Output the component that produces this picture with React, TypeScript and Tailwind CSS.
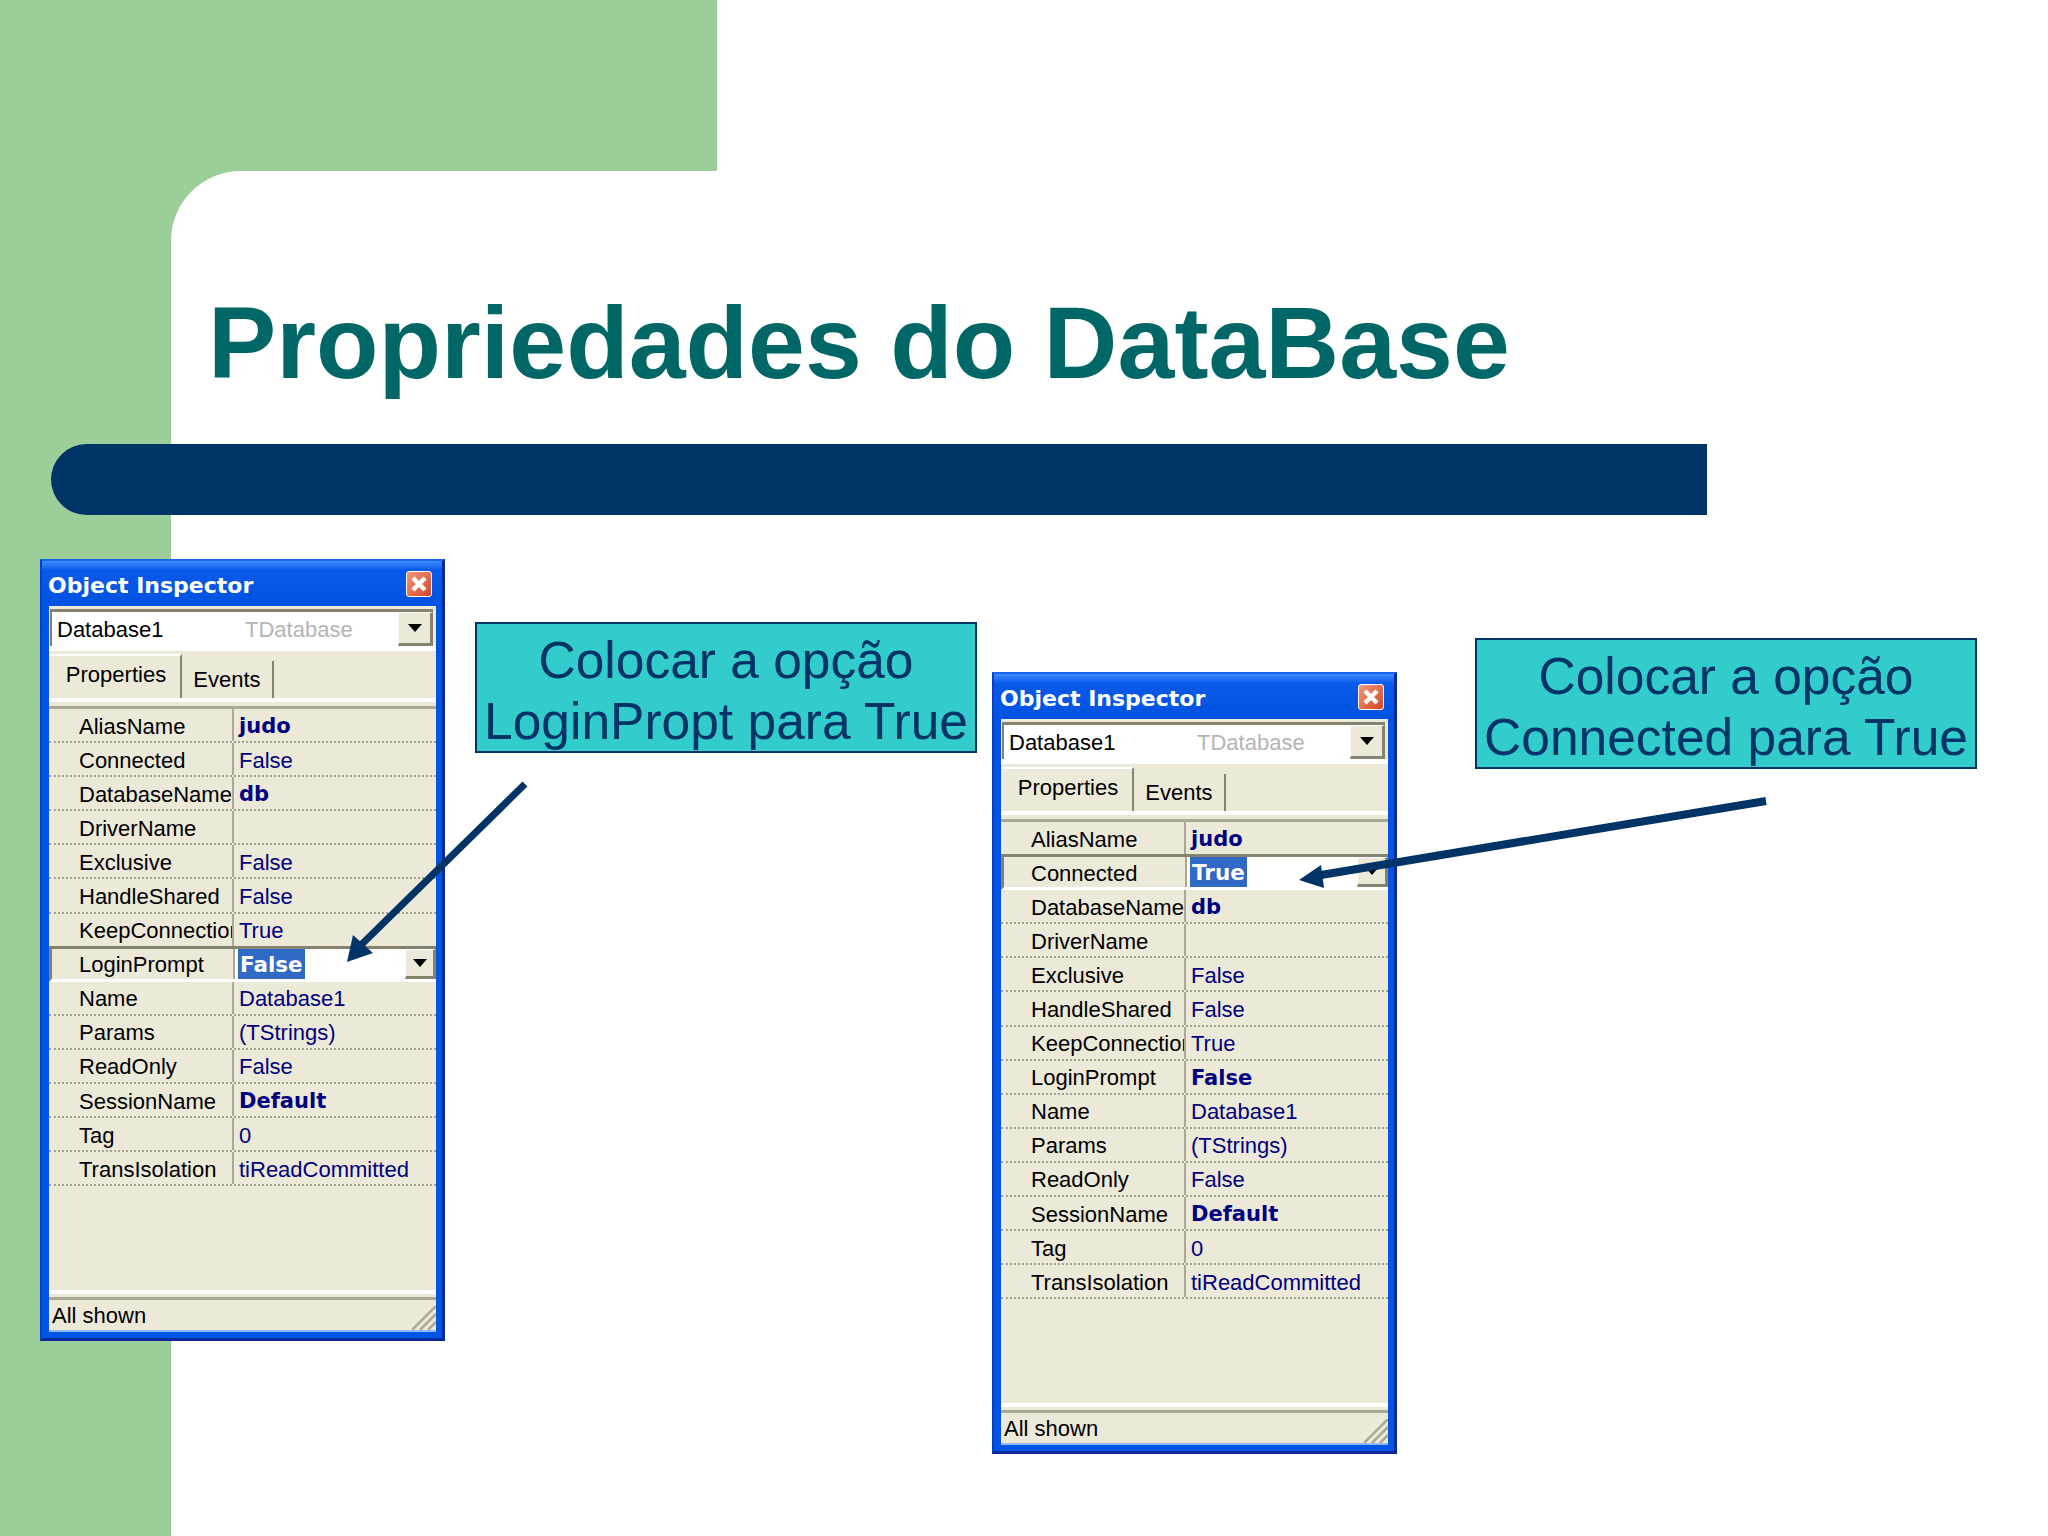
const leftRows = [
  { name: "AliasName", value: "judo", bold: true },
  { name: "Connected", value: "False" },
  { name: "DatabaseName", value: "db", bold: true },
  { name: "DriverName", value: "" },
  { name: "Exclusive", value: "False" },
  { name: "HandleShared", value: "False" },
  { name: "KeepConnection", value: "True" },
  { name: "LoginPrompt", value: "False", selected: true },
  { name: "Name", value: "Database1" },
  { name: "Params", value: "(TStrings)" },
  { name: "ReadOnly", value: "False" },
  { name: "SessionName", value: "Default", bold: true },
  { name: "Tag", value: "0" },
  { name: "TransIsolation", value: "tiReadCommitted" },
]

const rightRows = [
  { name: "AliasName", value: "judo", bold: true },
  { name: "Connected", value: "True", selected: true },
  { name: "DatabaseName", value: "db", bold: true },
  { name: "DriverName", value: "" },
  { name: "Exclusive", value: "False" },
  { name: "HandleShared", value: "False" },
  { name: "KeepConnection", value: "True" },
  { name: "LoginPrompt", value: "False", bold: true },
  { name: "Name", value: "Database1" },
  { name: "Params", value: "(TStrings)" },
  { name: "ReadOnly", value: "False" },
  { name: "SessionName", value: "Default", bold: true },
  { name: "Tag", value: "0" },
  { name: "TransIsolation", value: "tiReadCommitted" },
]

type Row = { name: string; value: string; bold?: boolean; selected?: boolean }

function DropButton({ className }: { className: string }) {
  return (
    <div
      className={`flex items-center justify-center bg-[#ece9d8] border-r-[3px] border-b-[3px] border-r-[#85826f] border-b-[#85826f] border-t border-l border-t-white border-l-white ${className}`}
    >
      <svg width="14" height="8" viewBox="0 0 14 8">
        <polygon points="0,0 14,0 7,8" fill="#000" />
      </svg>
    </div>
  )
}

function PropertyRow({ row }: { row: Row }) {
  if (row.selected) {
    return (
      <div className="flex h-[36.1px] -mt-[2px] shrink-0 border-t-[3px] border-l-[3px] border-b-[3px] border-t-[#85826f] border-l-[#85826f] border-b-white">
        <div className="w-[183px] shrink-0 pl-[27px] pt-[2px] flex items-center overflow-hidden whitespace-nowrap border-r-2 border-r-[#aca899] text-black">
          {row.name}
        </div>
        <div className="flex-1 flex items-stretch bg-white pl-[3px]">
          <div className="self-stretch flex items-center px-[2px] pt-[2px] bg-[#316ac5] text-white font-['DejaVu_Sans'] font-bold text-[21.5px]">
            {row.value}
          </div>
          <DropButton className="ml-auto w-[31px]" />
        </div>
      </div>
    )
  }
  return (
    <div className="flex h-[34.1px] shrink-0 border-b-2 border-dotted border-b-[#a5a291]">
      <div className="w-[185px] shrink-0 pl-[30px] pt-[2px] flex items-center overflow-hidden whitespace-nowrap border-r-2 border-r-[#aca899] text-black">
        {row.name}
      </div>
      <div
        className={
          row.bold
            ? "pl-[5px] pt-[4px] flex items-center text-[#000080] font-['DejaVu_Sans'] font-bold text-[21px]"
            : "pl-[5px] pt-[2px] flex items-center text-[#000080]"
        }
      >
        {row.value}
      </div>
    </div>
  )
}

function ObjectInspector({ rows, className }: { rows: Row[]; className: string }) {
  return (
    <div
      className={`w-[405px] h-[782px] shrink-0 flex flex-col border-t-2 border-l-2 border-r-[3px] border-b-[3px] border-t-[#1a64e8] border-l-[#0a3fc8] border-r-[#0a2a9c] border-b-[#0a2a9c] bg-[#0055e5] pl-[7px] pr-[6px] pb-[6px] font-['Liberation_Sans',sans-serif] text-[22px] ${className}`}
    >
      <div className="h-[45px] shrink-0 -ml-[7px] -mr-[6px] pl-[6px] pr-[10px] flex items-center justify-between bg-gradient-to-b from-[#3c8cff] via-[#0a5aea] via-20% to-[#0052e0]">
        <span className="pt-[4px] font-['DejaVu_Sans'] font-bold text-[22px] leading-none text-white">Object Inspector</span>
        <div className="w-[26px] h-[26px] rounded-[3px] border border-white bg-gradient-to-br from-[#ee9a7c] to-[#d6401c] flex items-center justify-center">
          <svg width="18" height="18" viewBox="0 0 18 18">
            <path d="M3 3 L15 15 M15 3 L3 15" stroke="#fff" strokeWidth="4.4" />
          </svg>
        </div>
      </div>

      <div className="flex-1 flex flex-col bg-[#ece9d8] min-h-0">
        <div className="mt-[3px] ml-[1px] mr-[3px] h-[37px] shrink-0 flex border-t-[3px] border-l-2 border-t-[#85826f] border-l-[#85826f] bg-white">
          <span className="pl-[5px] w-[193px] flex items-center text-black">Database1</span>
          <span className="flex items-center text-[#b4b4b4]">TDatabase</span>
          <DropButton className="ml-auto w-[35px]" />
        </div>
        <div className="h-[5px] shrink-0 bg-white" />

        <div className="h-[47px] shrink-0 flex items-end pl-[1px]">
          <div className="w-[132px] h-[44px] bg-[#ece9d8] border-r-2 border-r-[#85826f] flex items-center justify-center pb-[5px] pl-[2px] text-black border-t-2 border-t-white">
            Properties
          </div>
          <div className="w-[92px] h-[37px] border-r-2 border-r-[#85826f] flex items-center justify-center text-black">
            Events
          </div>
        </div>
        <div className="h-[4px] shrink-0 bg-white" />
        <div className="h-[4px] shrink-0" />
        <div className="h-[3px] shrink-0 bg-[#aca899]" />

        <div className="flex-1 flex flex-col min-h-0">
          {rows.map((row) => (
            <PropertyRow key={row.name} row={row} />
          ))}
        </div>

        <div className="h-[4px] shrink-0 bg-white" />
        <div className="h-[3px] mt-[3px] shrink-0 bg-[#aca899]" />
        <div className="h-[30px] shrink-0 relative flex items-center pl-[3px] text-black">
          All shown
          <svg className="absolute right-0 bottom-0" width="24" height="24" viewBox="0 0 24 24">
            <path d="M0 24 L24 0 M8 24 L24 8 M16 24 L24 16" stroke="#aca899" strokeWidth="2.5" />
          </svg>
        </div>
        <div className="h-[2px] shrink-0 bg-[#8fb8f5]" />
      </div>
    </div>
  )
}

function Callout({ lines, className }: { lines: string[]; className: string }) {
  return (
    <div
      className={`w-[502px] h-[131px] shrink-0 flex flex-col items-center justify-center pt-[6px] bg-[#33cccc] border-2 border-[#003366] font-['Liberation_Sans',sans-serif] text-[51.5px] leading-[61px] text-[#003366] ${className}`}
    >
      {lines.map((line) => (
        <span key={line} className="whitespace-nowrap">
          {line}
        </span>
      ))}
    </div>
  )
}

export default function App() {
  return (
    <div className="relative w-[2048px] h-[1536px] flex flex-col overflow-hidden bg-[#9bce98]">
      <div className="h-[171px] shrink-0 ml-[717px] bg-white" />

      <div className="flex-1 ml-[171px] bg-white rounded-tl-[70px]">
        <h1 className="pt-[120px] pl-[37px] font-['Liberation_Sans',sans-serif] font-bold text-[102.3px] leading-[103px] text-[#006666] whitespace-nowrap">
          Propriedades do DataBase
        </h1>
        <div className="mt-[50px] -ml-[120px] w-[1656px] h-[71px] bg-[#003366] rounded-l-full" />

        <div className="mt-[44px] -ml-[131px] flex items-start">
          <ObjectInspector rows={leftRows} className="" />
          <Callout lines={["Colocar a opção", "LoginPropt para True"]} className="ml-[30px] mt-[63px]" />
          <ObjectInspector rows={rightRows} className="ml-[15px] mt-[113px]" />
          <Callout lines={["Colocar a opção", "Connected para True"]} className="ml-[78px] mt-[79px]" />
        </div>
      </div>

      {/* setas por cima das janelas */}
      <svg className="absolute inset-0 pointer-events-none" width="2048" height="1536" viewBox="0 0 2048 1536">
        <line x1="525" y1="784" x2="360" y2="946" stroke="#003366" strokeWidth="7" />
        <polygon points="347,962 353,935 373,953" fill="#003366" />
        <line x1="1766" y1="801" x2="1315" y2="876" stroke="#003366" strokeWidth="8" />
        <polygon points="1299,880 1321,865 1324,888" fill="#003366" />
      </svg>
    </div>
  )
}
